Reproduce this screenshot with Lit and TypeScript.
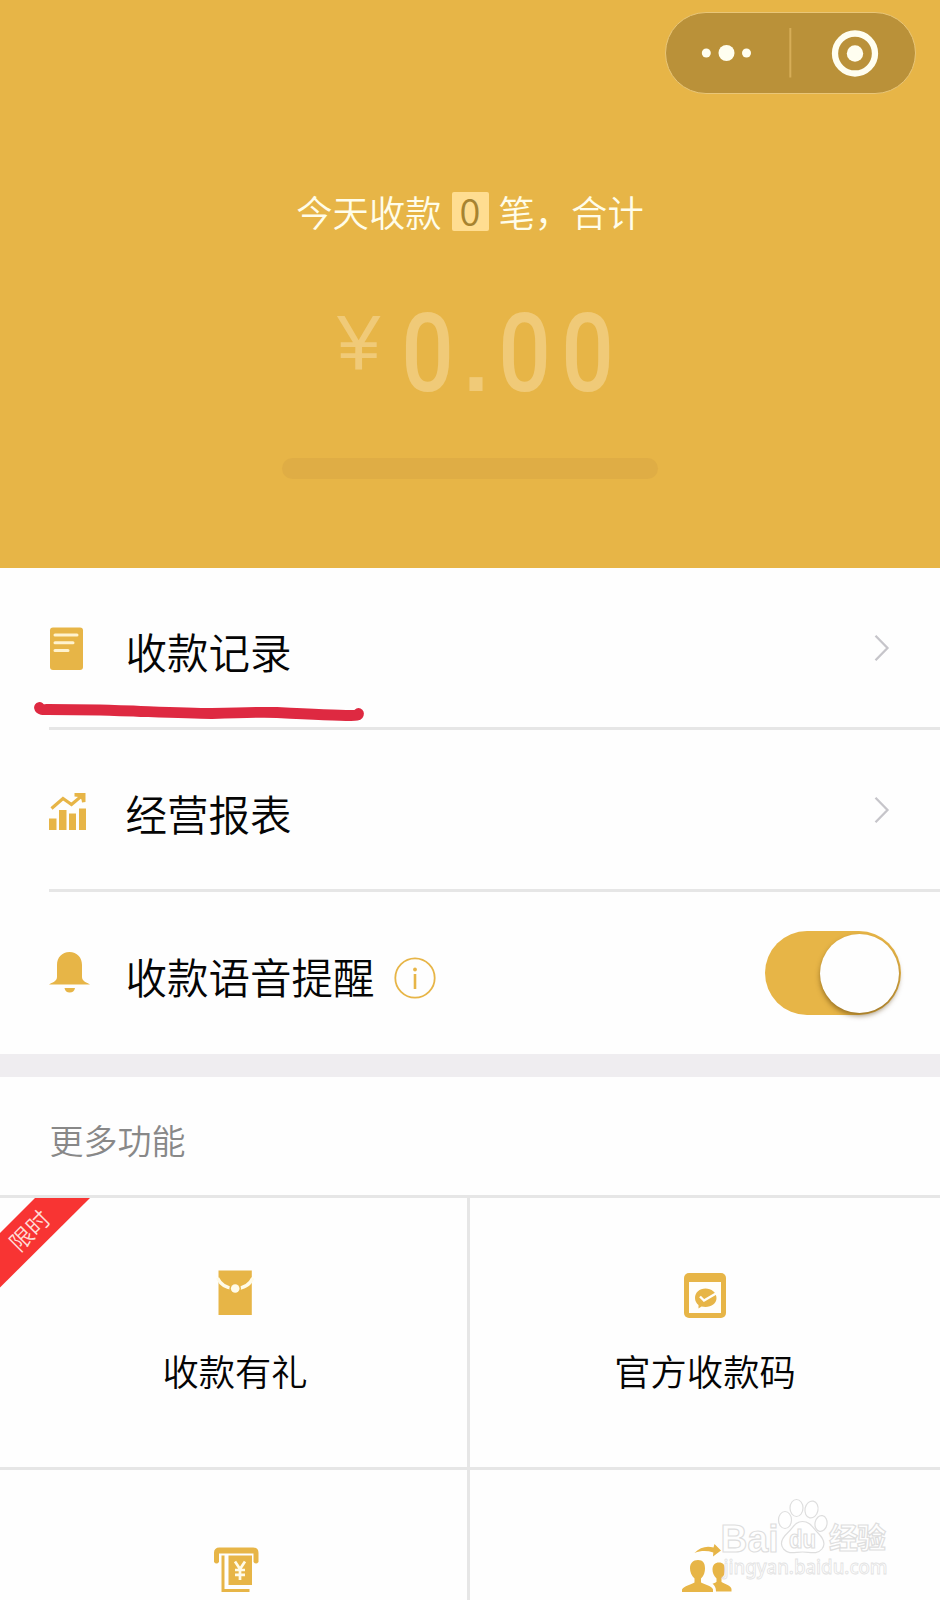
import { LitElement, html, css } from "lit";
import { customElement, property } from "lit/decorators.js";

const GOLD = "#e7b547";

const icons: Record<string, unknown> = {
  record: html`<svg width="42" height="44" viewBox="0 0 42 44">
    <rect x="1" y="1.500" width="33" height="42.500" rx="3" fill=${GOLD} />
    <path d="M6 9H28M6 16.700H24M6 24.500H19" stroke="#fff3cf" stroke-width="3" stroke-linecap="round" />
  </svg>`,
  chart: html`<svg width="42" height="44" viewBox="0 0 42 44">
    <path d="M0 30.500h7.500v11.500h-7.500zM10 22h7.500v20h-7.500zM20 25.500h7v16.500h-7zM30 20.500h7v21.500h-7z" fill=${GOLD} />
    <path d="M2.500 20.500L14 10.500L22.500 16.500L32 8.500" fill="none" stroke=${GOLD} stroke-width="3.200" />
    <path d="M25.500 5H36.500V14L33 14.500L32.500 11.500L29.500 9L25.500 8.500z" fill=${GOLD} />
  </svg>`,
  bell: html`<svg width="42" height="44" viewBox="0 0 42 44">
    <path d="M0 33.500C3 31.500 8 30.500 8 26V14C8 6.500 13 1 20.500 1S33 6.500 33 14V26C33 30.500 38 31.500 41 33.500z" fill=${GOLD} />
    <path d="M15.500 37H26C25.500 40 23.500 41.500 20.700 41.500S16 40 15.500 37z" fill=${GOLD} />
  </svg>`,
  gift: html`<svg width="50" height="50" viewBox="0 0 50 50">
    <path d="M8.500 2.500H41.800V47H8.500z" fill=${GOLD} />
    <path d="M7.500 10C11 17.500 17 20.500 25 20.500S39.500 17.500 42.800 10" fill="none" stroke="#fffbe8" stroke-width="3.300" />
    <circle cx="25.200" cy="20.500" r="5.800" fill=${GOLD} />
    <circle cx="25.200" cy="20.500" r="4.300" fill="#fffbe8" />
  </svg>`,
  code: html`<svg width="50" height="50" viewBox="0 0 50 50">
    <rect x="4" y="5" width="42" height="45" rx="5" fill=${GOLD} />
    <rect x="9" y="14" width="32" height="31" fill="#fffefa" />
    <path d="M25.500 20.500C31.500 20.500 36.500 24.500 36.500 30S31.500 39 25.500 39C24 39 23 38.700 21.500 38.500L18.500 40.500L18.500 37C16.500 35.500 15 33 15 30C15 24.500 19.500 20.500 25.500 20.500z" fill=${GOLD} />
    <path d="M20 28.500L24 32.500L36 25.500" fill="none" stroke="#fffefa" stroke-width="2.400" />
  </svg>`,
  cash: html`<svg width="50" height="50" viewBox="0 0 50 50">
    <path d="M3 19V10Q3 4.500 8.500 4.500H42Q47.500 4.500 47.500 10V19Q45 22 42.500 19V10.500H8V19Q5.500 22 3 19z" fill=${GOLD} />
    <path d="M12 12.500V47.500H38.500" fill="none" stroke=${GOLD} stroke-width="3" />
    <path d="M17.500 12.500H41V42H17.500z" fill=${GOLD} />
    <path d="M24 18.500L29 26L34 18.500M29 26V37M24 27H34M24 31.800H34" fill="none" stroke="#fffbe8" stroke-width="2.700" />
  </svg>`,
  friends: html`<svg width="54" height="50" viewBox="0 0 54 50">
    <path d="M14.500 10C20 4 27 2.500 33.500 4.500L34.500 1L41 7.500L33 13.500L33.300 9.500C27 7.500 21 7.500 14.500 10z" fill=${GOLD} />
    <path d="M2 49V46.500C4 43 11 41.500 14.500 39.500V35.500C11.500 32.500 10 29 10 25.500C10 20 13 17 18 17S25 20 25 25.500C25 29 24 32.500 21 35.500V39.500C25 41.500 32 43 33 46.500V49z" fill=${GOLD} />
    <path d="M36 48.500C36 44.500 34.500 42.500 32.500 40.800C34.500 40 36 39.500 36.500 38.800V35.500C33.500 32.500 32.500 29.500 32.500 26.500C32.500 22 35 19.500 39 19.500S45 22 45 26.500C45 30 44 33 41.500 35.500V39C45 41 51 42.500 51.500 46V48.500z" fill=${GOLD} />
  </svg>`,
};

const chevron = html`<svg width="18" height="30" viewBox="0 0 18 30">
  <path d="M2.500 2.800L14.500 15L2.500 27.200" fill="none" stroke="#c6c5ca" stroke-width="2.300" />
</svg>`;

@customElement("pay-row")
class PayRow extends LitElement {
  @property() icon = "";
  @property() label = "";
  static styles = css`
    :host { display: flex; height: 159px; align-items: center; padding-left: 49px; padding-right: 49px; }
    .icon { width: 76.5px; height: 44px; }
    .icon svg, ::slotted(*) { display: block; }
    .label { font-size: 41.5px; line-height: 60px; color: #050505; padding-top: 6px; }
    .end { margin-left: auto; display: flex; }
  `;
  render() {
    return html`<div class="icon">${icons[this.icon]}</div>
      <div class="label">${this.label}</div>
      <slot></slot>
      <div class="end"><slot name="end"></slot></div>`;
  }
}

@customElement("pay-tile")
class PayTile extends LitElement {
  @property() icon = "";
  @property() label = "";
  static styles = css`
    :host { display: flex; flex-direction: column; align-items: center; height: 269px; padding-top: 70px; box-sizing: border-box; position: relative; overflow: hidden; }
    svg { display: block; }
    .label { font-size: 36.3px; line-height: 52px; margin-top: 26px; color: #050505; }
  `;
  render() {
    return html`${icons[this.icon]}
      <div class="label">${this.label}</div>
      <slot></slot>`;
  }
}

@customElement("app-root")
class AppRoot extends LitElement {
  static styles = css`
    :host {
      display: block; position: relative; height: 1600px; overflow: hidden; background: #fefefe;
      font-family: "Noto Sans CJK SC", sans-serif; font-weight: 350;
    }
    svg { display: block; }
    .hero { height: 568px; background: #e7b547; box-sizing: border-box; padding-top: 12px; display: flex; flex-direction: column; align-items: center; }
    .capsule { align-self: flex-end; margin-right: 24px; width: 251px; height: 82px; box-sizing: border-box; border: 1.5px solid #e9c678; border-radius: 41px; background: #ba9139; }
    .summary { margin-top: 89px; height: 56px; display: flex; align-items: center; color: #fffdea; font-size: 36.3px; line-height: 52px; white-space: pre; }
    .count { width: 37px; height: 39px; line-height: 36px; font-size: 38px; margin: 0 10px; background: #ffdd91; color: #a78330; text-align: center; border-radius: 2px; }
    .amount { margin-top: 67px; height: 96px; display: flex; align-items: flex-start; color: #f0ca78; padding-left: 16px; }
    .yen { font-family: "Liberation Sans", sans-serif; font-size: 78px; line-height: 74px; width: 59px; }
    .digit { font-family: Roboto, sans-serif; font-weight: 500; font-size: 109px; line-height: 97px; width: 63px; text-align: center; transform: scaleX(.85); }
    .dot { width: 34px; text-align: center; font-family: "Liberation Sans", sans-serif; font-weight: 700; font-size: 92px; line-height: 107px; }
    .bar { margin-top: 56px; width: 376px; height: 21px; border-radius: 11px; background: #dfad45; }
    .line { height: 3px; background: #e6e6e6; }
    .inset { margin-left: 49px; }
    .info { margin-left: 19.5px; padding-top: 9px; }
    .toggle { width: 136px; height: 84px; box-sizing: border-box; border-radius: 42px; background: #e7b547; padding: 2.5px 2px; display: flex; justify-content: flex-end; margin-right: -10px; }
    .knob { width: 79px; height: 79px; border-radius: 50%; background: #fefefe; box-shadow: 0 3px 5px rgba(80, 50, 0, .5); }
    .voice { height: 162px; }
    .band { height: 23px; background: #efedf0; }
    .more { height: 118px; padding-left: 49.5px; font-size: 34px; line-height: 126px; color: #888; box-sizing: border-box; }
    .grid { display: grid; grid-template-columns: 467px 1fr; gap: 3px; background: #e6e6e6; }
    .grid pay-tile { background: #fefefe; }
    .grid .left { padding-left: 3px; }
    .grid .low { padding-top: 72.5px; }
    .grid .left.low { padding-left: 5px; }
    .grid .right { padding-left: 4px; }
    .ribbon { position: absolute; left: 0; top: 0; }
    .mark { position: absolute; left: 715px; top: 1494px; }
    .stroke { position: absolute; left: 30px; top: 695px; }
  `;
  render() {
    return html`
      <div class="hero">
        <div class="capsule">
          <svg width="248" height="79" viewBox="0 0 248 79">
            <g fill="#fffef0">
              <circle cx="40.300" cy="40" r="4.500" /><circle cx="60.500" cy="40" r="8" /><circle cx="80.500" cy="40" r="4.500" />
              <circle cx="189" cy="40.500" r="8.200" />
            </g>
            <path d="M124.300 15V64.500" stroke="#d6ad57" stroke-width="2" />
            <circle cx="189" cy="40.500" r="20" fill="none" stroke="#fffef0" stroke-width="6.300" />
          </svg>
        </div>
        <div class="summary"><span>今天收款</span><span class="count">0</span><span>笔，合计</span></div>
        <div class="amount">
          <span class="yen">¥</span><span class="digit">0</span><span class="dot">.</span><span class="digit">0</span><span class="digit">0</span>
        </div>
        <div class="bar"></div>
      </div>
      <pay-row icon="record" label="收款记录"><div slot="end">${chevron}</div></pay-row>
      <div class="line inset"></div>
      <pay-row icon="chart" label="经营报表"><div slot="end">${chevron}</div></pay-row>
      <div class="line inset"></div>
      <pay-row class="voice" icon="bell" label="收款语音提醒">
        <div class="info">
          <svg width="42" height="42" viewBox="0 0 42 42">
            <circle cx="21" cy="21" r="19.700" fill="none" stroke=${GOLD} stroke-width="1.800" />
            <circle cx="21" cy="12.500" r="1.900" fill=${GOLD} />
            <path d="M21 17V32" stroke=${GOLD} stroke-width="2.600" />
          </svg>
        </div>
        <div slot="end" class="toggle"><div class="knob"></div></div>
      </pay-row>
      <div class="band"></div>
      <div class="more">更多功能</div>
      <div class="line"></div>
      <div class="grid">
        <pay-tile class="left" icon="gift" label="收款有礼">
          <svg class="ribbon" width="92" height="90" viewBox="0 0 92 90">
            <path d="M35 0H90L0 89.500V35z" fill="#f83433" />
            <text x="30" y="41" transform="rotate(-45 30 33)" text-anchor="middle" font-size="23" fill="#ffdcd6">限时</text>
          </svg>
        </pay-tile>
        <pay-tile icon="code" label="官方收款码"></pay-tile>
        <pay-tile class="left low" icon="cash"></pay-tile>
        <pay-tile class="right low" icon="friends"></pay-tile>
      </div>
      <svg class="stroke" width="340" height="34" viewBox="0 0 340 34">
        <path d="M9.500 12.500C10 15 14 14.500 18 14.500L70 15C110 16 150 18.500 182 18.500C210 17.500 235 17 247 17.500C275 19 305 20.500 321 20.500C326 20.500 328.500 20.500 328.500 18.500" fill="none" stroke="#de2941" stroke-width="10.800" stroke-linecap="round" stroke-linejoin="round" />
      </svg>
      <svg class="mark" width="180" height="90" viewBox="0 0 180 90">
        <g fill="#fff" fill-opacity=".85" stroke="#dedede" stroke-width="1.200">
          <text x="5.500" y="58" font-family="Liberation Sans" font-weight="700" font-size="39" textLength="58" lengthAdjust="spacingAndGlyphs">Bai</text>
          <ellipse cx="70" cy="26" rx="6.500" ry="8.500" /><ellipse cx="81.500" cy="14" rx="6.500" ry="8.500" />
          <ellipse cx="96.500" cy="15.500" rx="6.500" ry="8.500" transform="rotate(12 96.500 15.500)" /><ellipse cx="106" cy="29.500" rx="6" ry="8" transform="rotate(10 106 29.500)" />
          <path d="M87.500 27.500C95 27.500 98 34 103 39C109 45 111 50 107 55C102 61 95 58 87.500 58S74 61 68.500 55C64.500 50 67 44 73 38.500C78 34 80 27.500 87.500 27.500z" />
          <text x="74" y="54" font-family="Liberation Sans" font-weight="700" font-size="25" textLength="27" lengthAdjust="spacingAndGlyphs">du</text>
          <text x="114" y="54.500" font-weight="700" font-size="29" textLength="57">经验</text>
          <text x="8.500" y="80" font-family="Noto Sans" font-weight="500" font-size="19" textLength="164" lengthAdjust="spacingAndGlyphs" stroke="#e2e2e2" stroke-width=".8">jingyan.baidu.com</text>
        </g>
      </svg>
    `;
  }
}
